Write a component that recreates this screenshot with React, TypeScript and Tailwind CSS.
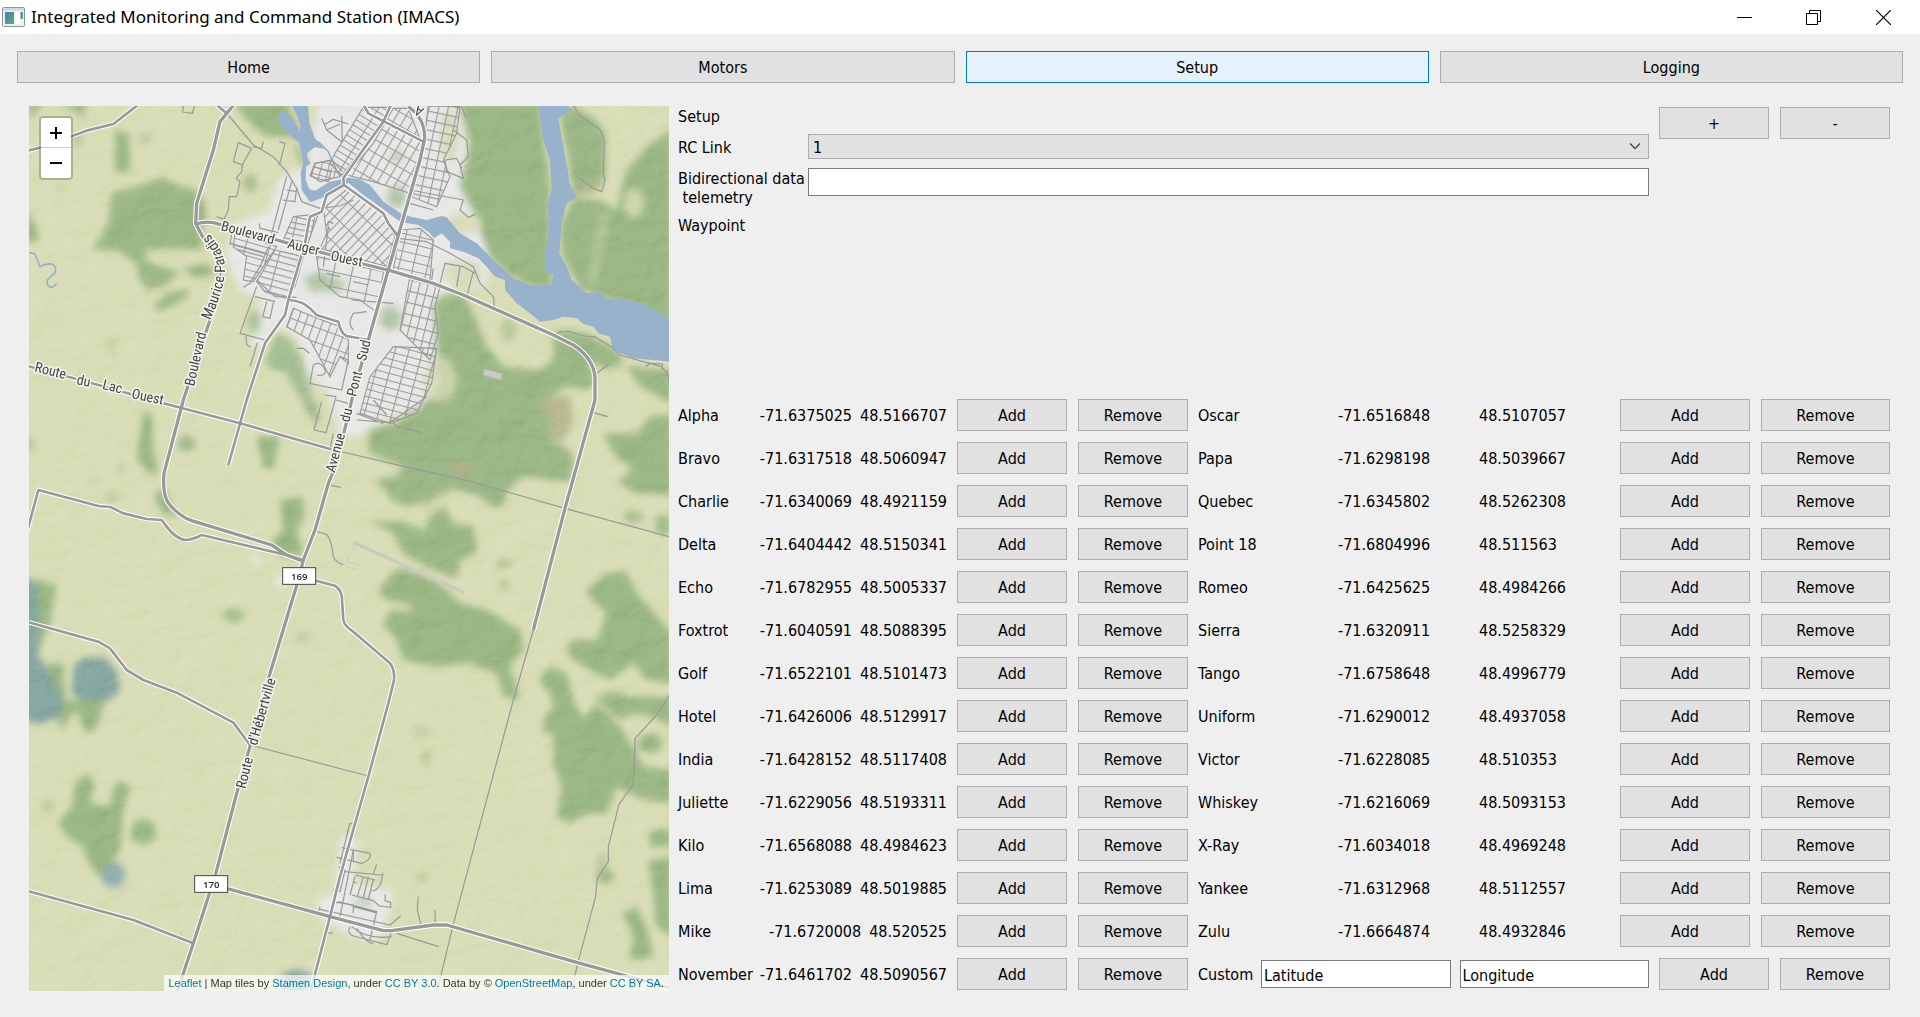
import React from "react";
import clsx from "clsx";

type Waypoint = [name: string, longitude: string, latitude: string];

const LEFT: Waypoint[] = [
  ["Alpha", "-71.6375025", "48.5166707"],
  ["Bravo", "-71.6317518", "48.5060947"],
  ["Charlie", "-71.6340069", "48.4921159"],
  ["Delta", "-71.6404442", "48.5150341"],
  ["Echo", "-71.6782955", "48.5005337"],
  ["Foxtrot", "-71.6040591", "48.5088395"],
  ["Golf", "-71.6522101", "48.5101473"],
  ["Hotel", "-71.6426006", "48.5129917"],
  ["India", "-71.6428152", "48.5117408"],
  ["Juliette", "-71.6229056", "48.5193311"],
  ["Kilo", "-71.6568088", "48.4984623"],
  ["Lima", "-71.6253089", "48.5019885"],
  ["Mike", "-71.6720008", "48.520525"],
  ["November", "-71.6461702", "48.5090567"],
];

const RIGHT: Waypoint[] = [
  ["Oscar", "-71.6516848", "48.5107057"],
  ["Papa", "-71.6298198", "48.5039667"],
  ["Quebec", "-71.6345802", "48.5262308"],
  ["Point 18", "-71.6804996", "48.511563"],
  ["Romeo", "-71.6425625", "48.4984266"],
  ["Sierra", "-71.6320911", "48.5258329"],
  ["Tango", "-71.6758648", "48.4996779"],
  ["Uniform", "-71.6290012", "48.4937058"],
  ["Victor", "-71.6228085", "48.510353"],
  ["Whiskey", "-71.6216069", "48.5093153"],
  ["X-Ray", "-71.6034018", "48.4969248"],
  ["Yankee", "-71.6312968", "48.5112557"],
  ["Zulu", "-71.6664874", "48.4932846"],
];

function PushButton({
  children,
  className,
  active,
  ...rest
}: React.ButtonHTMLAttributes<HTMLButtonElement> & { active?: boolean }) {
  return (
    <button
      type="button"
      className={clsx(
        "h-8 border pt-0.5 text-center leading-7",
        active ? "border-[#0078d7] bg-[#e5f1fb]" : "border-[#adadad] bg-[#e1e1e1]",
        className,
      )}
      {...rest}
    >
      {children}
    </button>
  );
}

/* ---------- map ---------- */

const FORESTS = [
  "M275,280 L330,265 L430,232 L470,255 L520,265 L550,300 L560,350 L540,400 L550,450 L470,445 L380,450 L370,470 L400,495 L480,515 L440,555 L380,570 L355,530 L350,490 L290,450 L215,450 L250,400 L265,360Z",
  "M400,620 L440,580 L500,570 L510,585 L470,610 L420,635Z",
  "M480,505 L560,490 L590,520 L540,535Z",
  "M285,90 L325,100 L330,215 L285,215Z",
  "M27,10 L70,10 L27,60Z",
  "M120,10 L200,10 L190,48Z",
  "M640,8 L800,8 L830,70 L850,110 L740,110 L680,60Z",
  "M815,110 L860,180 L845,200Z",
  "M20,330 L45,370 L58,420 L20,430Z",
  "M165,100 L188,115 L170,150Z",
  "M1310,8 L1560,8 L1575,150 L1590,250 L1590,400 L1600,560 L1530,560 L1460,520 L1380,440 L1330,380 L1290,300 L1330,220 L1350,120Z",
  "M1620,50 L1660,18 L1730,60 L1755,100 L1755,240 L1720,270 L1660,290 L1640,150Z",
  "M1955,90 L1880,140 L1820,210 L1800,280 L1790,330 L1740,300 L1660,295 L1620,380 L1625,460 L1680,570 L1800,610 L1955,670Z",
  "M1225,650 L1260,590 L1330,580 L1360,640 L1400,740 L1450,800 L1560,810 L1600,780 L1600,710 L1640,700 L1700,740 L1725,850 L1700,870 L1640,860 L1580,900 L1590,970 L1600,1030 L1640,1045 L1665,1080 L1650,1145 L1510,1130 L1460,1170 L1455,1215 L1420,1222 L1380,1190 L1300,1165 L1230,1200 L1160,1220 L1110,1200 L1100,1170 L1060,1140 L1130,1130 L1150,1100 L1050,1060 L1045,990 L1130,970 L1200,910 L1255,850 L1245,720Z",
  "M1600,690 L1700,700 L1790,750 L1810,790 L1760,810 L1700,780Z",
  "M1820,800 L1955,810 L1955,910 L1860,860Z",
  "M1750,1000 L1850,1000 L1890,950 L1955,945 L1955,1185 L1850,1180 L1790,1145 L1840,1110 L1780,1060Z",
  "M1055,1265 L1140,1265 L1215,1290 L1235,1240 L1275,1220 L1300,1270 L1360,1280 L1370,1360 L1320,1380 L1310,1435 L1270,1420 L1220,1400 L1150,1360 L1120,1300Z",
  "M1075,1470 L1130,1405 L1200,1420 L1270,1460 L1320,1510 L1400,1530 L1500,1590 L1510,1650 L1470,1700 L1500,1800 L1450,1790 L1430,1720 L1350,1690 L1250,1700 L1150,1680 L1130,1620 L1090,1570 L1110,1530 L1180,1535 L1160,1510 L1100,1500Z",
  "M1695,1475 L1760,1420 L1820,1415 L1850,1480 L1920,1560 L1955,1600 L1955,1750 L1880,1740 L1840,1690 L1770,1740 L1690,1700 L1640,1660 L1650,1620 L1730,1620 L1760,1540Z",
  "M1575,1720 L1640,1720 L1660,1800 L1690,1855 L1730,1810 L1800,1880 L1850,1960 L1870,2000 L1955,2010 L1955,2110 L1860,2095 L1790,2060 L1760,2140 L1700,2140 L1650,2170 L1610,2150 L1625,2060 L1600,1990 L1600,1900 L1570,1900 L1570,1860 L1600,1820Z",
  "M1720,1790 L1955,1790 L1955,1880 L1900,1850 L1840,1840 L1800,1860Z",
  "M1890,2190 L1955,2190 L1955,2240 L1890,2240Z",
  "M1885,2280 L1955,2270 L1955,2510 L1910,2480 L1895,2350Z",
  "M1805,2440 L1850,2420 L1885,2500 L1900,2570 L1830,2580 L1840,2500Z",
  "M370,940 L395,940 L400,1060 L415,1120 L390,1120 L350,1080Z",
  "M400,1190 L430,1160 L470,1250 L430,1240Z",
  "M710,1010 L780,1010 L760,1110 L730,1100Z",
  "M780,1200 L850,1190 L850,1260 L830,1290 L850,1365 L780,1370 L755,1320 L790,1290Z",
  "M40,1440 L110,1455 L90,1570 L60,1640 L40,1700Z",
  "M80,1690 L130,1690 L135,1800 L160,1800 L260,1790 L230,1880 L200,1905 L170,1830 L120,1890Z",
  "M155,2120 L165,2050 L200,2020 L225,2050 L210,2110 L270,2120 L280,2060 L300,2040 L330,2060 L310,2120 L300,2250 L240,2330 L200,2280 L190,2240 L140,2210 L115,2170Z",
  "M850,530 L900,515 L980,545 L960,575 L870,575Z",
  "M735,790 L770,700 L810,720 L850,790 L860,860 L890,920 L900,980 L860,930 L800,820Z",
];

/* [cx, cy, rx, ry, opacity] */
const GROVES = [
  [690, 250, 22, 28, 0.8], [375, 115, 18, 20, 0.4], [120, 262, 14, 14, 0.3], [705, 665, 22, 30, 0.8],
  [1130, 290, 32, 32, 0.9], [1130, 170, 24, 22, 0.4], [1112, 655, 36, 38, 0.8], [1465, 690, 24, 36, 0.5],
  [1600, 1740, 38, 34, 1], [1450, 1390, 24, 12, 0.7], [1452, 1455, 15, 20, 0.6], [1840, 1250, 30, 18, 0.8],
  [1930, 1275, 25, 30, 0.9], [1890, 1930, 36, 28, 1], [1755, 2330, 28, 22, 0.9], [1745, 2285, 16, 30, 0.5],
  [1205, 1895, 28, 16, 0.4], [1220, 1975, 16, 28, 0.4], [1207, 2330, 22, 16, 0.4], [498, 1030, 26, 24, 0.9],
  [275, 1190, 20, 16, 0.4], [24, 1030, 16, 18, 0.7], [370, 2195, 38, 38, 1], [82, 2120, 16, 18, 0.5],
  [640, 1545, 34, 20, 0.8], [850, 1612, 26, 16, 0.4], [1780, 1790, 36, 18, 0.8], [1225, 460, 34, 20, 0.2],
  [305, 1105, 14, 22, 0.3], [225, 1145, 20, 12, 0.3], [275, 740, 14, 34, 0.25], [870, 470, 16, 40, 0.3],
];

const TOWNS = [
  "M880,70 L900,10 L1320,10 L1345,150 L1320,260 L1370,350 L1410,480 L1400,560 L1300,560 L1240,600 L1250,740 L1260,860 L1190,930 L1120,950 L1010,1010 L960,1000 L940,940 L920,870 L860,820 L840,720 L780,680 L730,740 L690,740 L720,600 L650,560 L620,460 L640,370 L740,340 L780,230 L860,200Z",
  "M965,2200 L1010,2220 L1000,2350 L1120,2370 L1110,2430 L1070,2530 L980,2500 L900,2450 L890,2400 L940,2380Z",
];

const LAWNS = [
  [1260, 840, 50, 70], [1290, 110, 30, 80], [1330, 520, 60, 40], [1330, 370, 60, 30],
];

const RIVER =
  "M815,16 L864,16 L868,70 L885,115 L915,146 L885,142 L862,158 L862,175 L872,190 L858,200 L857,240 L868,268 L885,272 L930,245 L985,233 L1020,238 L1050,255 L1090,305 L1150,345 L1220,360 L1265,348 L1280,352 L1320,400 L1370,430 L1420,480 L1480,535 L1535,557 L1595,552 L1600,525 L1575,515 L1575,490 L1585,400 L1585,300 L1595,270 L1590,180 L1570,120 L1555,16 L1638,16 L1658,30 L1615,55 L1630,140 L1645,220 L1648,250 L1672,293 L1640,310 L1625,370 L1618,460 L1640,500 L1655,540 L1700,580 L1735,575 L1760,595 L1860,605 L1950,658 L1950,785 L1840,775 L1780,750 L1770,710 L1735,700 L1720,680 L1690,672 L1670,655 L1630,650 L1600,660 L1560,665 L1530,640 L1490,610 L1455,570 L1455,540 L1425,530 L1400,500 L1375,475 L1330,455 L1290,445 L1290,425 L1265,400 L1242,415 L1225,395 L1195,375 L1140,365 L1080,320 L1030,285 L985,248 L930,285 L870,307 L845,270 L842,220 L850,190 L838,130 L805,100 L780,70 L778,35 L790,30 L820,60 L838,95 L842,80 L830,45Z";

const HIGHWAYS = [
  "M530,372 Q560,360 600,373 L1030,492 L1110,512 L1240,550 L1330,585 L1600,705 L1660,735 Q1720,775 1725,830 L1725,900 L1635,1225 L1540,1590",
  "M1165,20 Q1215,55 1214,115 L1200,180 L1105,510 L1045,720 L1000,880 L950,1090 L925,1150 L885,1290 L850,1380 L835,1440 L750,1720 L690,1940 L650,2080 L585,2330 L565,2390 L520,2530 L470,2680",
  "M645,10 L600,65 L580,150 L530,310 L527,370 L545,405 L585,460 L605,520 L590,600 L490,900 L432,1120 Q426,1190 450,1215 Q480,1250 515,1262 L755,1335 L800,1365 L850,1382",
  "M600,2360 L930,2450 L1090,2492 L1115,2492 L1240,2475 L1280,2475 L1670,2587 L1955,2665",
];

const SECONDARY = [
  "M1115,10 L1090,65 L1025,155 L970,235 L972,255 L920,285 L905,335 L870,350 L855,430 L805,600 L795,645 L735,730 L680,900 L625,1095",
  "M972,255 L1090,340 L1105,370 L1135,410",
  "M1028,10 L1045,40 L1210,125",
  "M810,600 Q850,605 870,625 L890,645 L955,665 Q962,700 980,708 L1045,720",
  "M585,10 L622,42",
  "M20,153 L60,143 L200,92 L280,72 L355,14",
  "M20,797 L200,845 L430,910 L660,970 L930,1047",
  "M20,1300 L55,1170 L235,1218 L272,1221 L310,1240 L380,1257 L425,1260 L440,1280 Q470,1320 500,1320 Q520,1318 545,1305 L800,1365 L850,1385",
  "M20,1565 L235,1625 L270,1645 L320,1710 L370,1740 L470,1778 L640,1868 L690,1935",
  "M880,1440 L945,1457 Q968,1475 966,1500 L970,1560 Q975,1580 1000,1595 L1110,1690 Q1125,1710 1122,1740 L1105,1810 L1045,2030 L960,2330 L930,2450 L870,2680",
  "M20,2372 L340,2460 L520,2530",
];

const LANES = [
  "M1540,1590 L1480,1800 L1298,2480 L1250,2680",
  "M930,1047 L1190,1108 L1335,1140 L1635,1225 L1955,1312",
  "M690,1935 L1045,2028",
  "M1955,1775 L1910,1845 L1845,1915 L1843,2000 L1838,2055 L1797,2113 L1765,2240 L1765,2285 L1732,2335 L1727,2390 L1673,2590 L1653,2680",
  "M622,42 L700,135 L760,170 L800,215 L830,265 L845,305 L900,325 L960,318 L1000,300",
  "M695,145 L655,128 L640,185 L667,195 L675,180 L695,145 M667,195 L665,215 L648,235 L660,245 L650,290 L628,290 L625,330 L612,358 L590,350",
  "M700,140 L725,145 L730,125 M778,125 L795,130 L778,195",
  "M490,18 L488,36 L518,40 L523,18",
  "M800,230 L755,400 M815,245 L775,390 M830,265 L825,305 L788,300 M800,270 L830,275",
  "M905,55 L920,90 L965,125 M912,75 L940,58 L985,72 M965,48 L967,125 M920,90 L960,72",
  "M870,228 L885,190 L940,180 M870,228 L925,245 L935,205 M880,200 L930,215",
  "M885,1293 L920,1303 Q935,1320 940,1370 Q945,1385 970,1395",
  "M1656,10 L1680,48 L1735,85 Q1755,100 1752,150 L1750,220 L1755,240 L1745,275 L1720,265 L1678,235",
  "M1607,710 Q1605,692 1650,695 L1690,708 L1725,710 L1780,745 L1800,765 L1870,785 L1925,800 L1945,825 L1948,850 M1878,800 L1890,790 L1928,792 L1925,808",
  "M1730,820 L1768,792 M1720,938 L1763,950",
  "M1135,415 L1220,425 L1290,460 L1360,500 L1380,550 L1420,590 L1425,635 M1360,515 L1340,590",
  "M1260,550 L1275,490 L1330,500 L1365,520 M1320,500 L1310,560 M1240,505 L1235,540",
  "M1170,270 L1330,300 L1320,330 L1345,352 L1368,342 M1170,310 L1240,330",
  "M1300,90 L1340,120 L1345,170 L1320,195 L1330,235 L1280,215 L1275,180 L1310,175 L1325,205",
  "M1320,10 L1340,55",
  "M710,560 L660,700 L735,720 M705,590 L765,605 M740,605 L728,650 L750,655 L760,608 M678,708 L680,735 L692,740 M712,728 L690,800 M710,540 L765,590 L830,592",
  "M718,370 L720,385 L775,398 M630,430 L740,460 M650,448 L730,470 M635,400 L630,435 M745,440 L725,490 L690,550 L670,562",
  "M905,905 L882,990 L918,998 L948,890 L915,885 M940,1000 L930,1047 M948,900 L985,910",
  "M920,1153 L962,1162",
  "M830,745 L850,745 L868,760 M868,850 L965,870 L985,780 L960,770 M870,850 L880,795 Q900,780 915,810 Q920,830 890,825",
  "M1010,960 L1110,968 L1220,890 M1110,960 L1130,978 L1205,998 M1010,940 L1090,970 M1060,900 L1100,945",
  "M930,390 Q920,375 925,365 L940,370 M925,380 L910,500 M920,520 L960,530",
  "M1000,690 Q980,670 1000,640 L1040,635 M995,600 L1120,610 M1045,555 L1000,545",
  "M990,2170 L1002,2172 M990,2168 L960,2290 M965,2243 L1050,2260 Q1055,2280 1025,2290 L950,2272 M1000,2250 L1000,2285 M975,2315 L1085,2325 M1070,2293 L1060,2322 M1088,2318 Q1085,2370 1055,2373",
  "M1005,2330 L990,2385 M1005,2325 L1065,2340 M1030,2330 L1012,2390 M1045,2330 L1030,2392 M1060,2338 L1045,2398 M995,2385 L1060,2402 L1078,2418 L1112,2422 L1112,2408 L1095,2402 L1096,2383",
  "M1000,2250 L960,2450 M900,2420 L895,2440 M900,2428 L1110,2475 L1142,2448 M955,2405 L1070,2435 L1050,2520 M1000,2440 L1000,2420 L1068,2438 M990,2480 Q980,2500 1000,2508 L1100,2534 L1115,2495 M995,2480 Q1040,2520 1115,2510 M1010,2485 Q1040,2530 1060,2530",
  "M1195,2390 L1192,2430 L1203,2475 M1245,2430 L1246,2475 M1130,2500 L1256,2540 M915,2497 L938,2500",
  "M955,2300 L975,2310 L960,2375 L940,2370 M935,2405 L1000,2415 M1010,2350 L1000,2345",
];

/* Blocks of parallel streets: outline, rotation, street spacing across and along */
const BLOCKS: { d: string; angle: number; w: number; h: number }[] = [
  { d: "M1120,25 L1165,25 L1205,130 L1170,280 L1060,245 L980,225 L1060,130Z", angle: 30, w: 25, h: 36 },
  { d: "M1030,22 L1110,22 L1080,70 L965,228 L930,190 L945,160Z", angle: 32, w: 44, h: 18 },
  { d: "M1225,18 L1320,20 L1310,100 L1270,180 L1290,230 L1250,320 L1175,290 L1205,180Z", angle: 12, w: 28, h: 28 },
  { d: "M985,265 L1090,345 L1125,410 L1100,500 L900,445 L920,400 L910,325Z", angle: 44, w: 20, h: 58 },
  { d: "M820,350 L895,342 L860,440 L790,420Z", angle: 12, w: 52, h: 17 },
  { d: "M765,450 L850,470 L825,560 L800,595 L735,575 L710,545Z", angle: 15, w: 58, h: 19 },
  { d: "M1170,530 L1260,560 L1245,620 L1255,700 L1230,780 L1140,690Z", angle: 14, w: 24, h: 34 },
  { d: "M1120,740 L1250,745 L1235,850 L1190,940 L1110,970 L1020,940 L1050,830Z", angle: 15, w: 40, h: 21 },
  { d: "M820,625 L880,650 L960,680 L985,720 L985,790 L960,770 L930,830 L870,720 L800,680Z", angle: 20, w: 24, h: 42 },
  { d: "M1140,390 L1200,385 L1240,420 L1230,540 L1120,510Z", angle: 13, w: 42, h: 26 },
  { d: "M645,400 L770,440 L700,545 L670,540 L680,470 L640,440Z", angle: 16, w: 70, h: 20 },
  { d: "M890,470 L1090,515 L1075,640 L1020,600 L960,590 L900,540Z", angle: 12, w: 54, h: 44 },
  { d: "M885,190 L935,180 L960,230 L900,245 L872,225Z", angle: 14, w: 22, h: 20 },
];

const LABELS: [text: string, x: number, y: number, angle: number][] = [
  ["Boulevard", 601, 390, 15], ["Auger", 800, 444, 13], ["Ouest", 930, 480, 12],
  ["Boulevard", 522, 860, -77],
  ["Route", 42, 814, 14], ["du", 168, 852, 13], ["Lac", 245, 866, 14], ["Ouest", 333, 894, 12],
  ["Avenue", 944, 1120, -75], ["du", 987, 968, -76], ["Pont", 1008, 892, -76], ["Sud", 1037, 785, -76],
  ["Route", 676, 2068, -76], ["d'Hébertville", 710, 1938, -74],
];

const PARADIS_PATH = "M570,662 Q626,540 612,480 Q600,430 546,380";

function Shield({ x, y, n }: { x: number; y: number; n: string }) {
  return (
    <g>
      <rect x={x} y={y} width="99" height="50" fill="#fff" stroke="#444" strokeWidth="3" />
      <text x={x + 50} y={y + 36} textAnchor="middle" fontSize="29" fontWeight="600" fill="#333" className="font-['Noto_Sans',sans-serif]">
        {n}
      </text>
    </g>
  );
}

function MapDrawing() {
  return (
    <svg viewBox="27 18 1920 2655" preserveAspectRatio="xMidYMid slice" className="absolute inset-0 h-full w-full" role="img" aria-label="Terrain map">
      <defs>
        <filter id="soft" x="-10%" y="-10%" width="120%" height="120%" colorInterpolationFilters="sRGB">
          <feGaussianBlur stdDeviation="11" />
        </filter>
        <filter id="relief" x="0" y="0" width="100%" height="100%" colorInterpolationFilters="sRGB">
          <feTurbulence type="fractalNoise" baseFrequency="0.011 0.015" numOctaves="5" seed="8" />
          <feDiffuseLighting lightingColor="#fff" surfaceScale="26" diffuseConstant="0.66">
            <feDistantLight azimuth="225" elevation="48" />
          </feDiffuseLighting>
        </filter>
        <path id="paradis" d={PARADIS_PATH} />
        {BLOCKS.map((b, i) => (
          <pattern key={i} id={`block${i}`} width={b.w} height={b.h} patternUnits="userSpaceOnUse" patternTransform={`rotate(${b.angle})`}>
            <path d={`M0,1.5 H${b.w} M1.5,0 V${b.h}`} stroke="#999" strokeWidth="3.4" />
          </pattern>
        ))}
      </defs>
      <rect x="27" y="18" width="1920" height="2655" fill="#dadeb8" />
      <g filter="url(#soft)">
        <g fill="#9cb886">
          {FORESTS.map((d) => <path key={d} d={d} />)}
          {GROVES.map(([cx, cy, rx, ry, o]) => <ellipse key={`${cx}-${cy}`} cx={cx} cy={cy} rx={rx} ry={ry} opacity={o} />)}
        </g>
        <g fill="#dadeb8">
          <path d="M1770,10 L1850,10 L1850,90 L1800,200 L1770,240 L1770,120Z" opacity="0.8" />
          <ellipse cx="1840" cy="310" rx="32" ry="44" opacity="0.8" />
          <path d="M1740,340 L1770,340 L1730,550 L1700,550Z" opacity="0.4" />
        </g>
        <g fill="#b5b48d" opacity="0.85">
          <path d="M1550,890 L1650,890 L1660,960 L1625,1030 L1600,1020 L1590,960Z" />
          <ellipse cx="1325" cy="1105" rx="42" ry="20" />
          <ellipse cx="1220" cy="1210" rx="28" ry="18" opacity="0.4" />
          <ellipse cx="1705" cy="258" rx="40" ry="22" opacity="0.7" />
        </g>
        <g fill="#88a8a2">
          <path d="M10,1430 L50,1450 L58,1560 L50,1660 L90,1720 L130,1800 L120,1850 L60,1872 L10,1860Z" />
          <path d="M160,1700 L190,1672 L250,1672 L290,1710 L300,1770 L270,1800 L190,1805 L155,1780Z" />
          <ellipse cx="830" cy="2645" rx="52" ry="34" />
        </g>
        <ellipse cx="280" cy="2325" rx="36" ry="38" fill="#93aeb0" />
        <g fill="#e8e8e7">
          {TOWNS.map((d) => <path key={d} d={d} />)}
          <circle cx="710" cy="1380" r="14" />
          <circle cx="785" cy="1440" r="20" />
        </g>
        <g fill="#d6dbb4" opacity="0.8">
          {LAWNS.map(([cx, cy, rx, ry]) => <ellipse key={cy} cx={cx} cy={cy} rx={rx} ry={ry} />)}
        </g>
        <g fill="#a9c19a" opacity="0.8">
          <path d="M850,530 L900,515 L980,545 L960,575 L870,575Z" />
          <ellipse cx="1130" cy="290" rx="30" ry="32" />
          <ellipse cx="1130" cy="172" rx="22" ry="20" opacity="0.6" />
          <ellipse cx="1112" cy="655" rx="34" ry="36" />
          <ellipse cx="705" cy="665" rx="20" ry="34" />
          <path d="M740,800 L780,710 L815,730 L850,800 L890,920 L860,920 L800,820Z" />
          <ellipse cx="1030" cy="2405" rx="30" ry="14" opacity="0.7" />
        </g>
      </g>
      <rect x="27" y="18" width="1920" height="2655" filter="url(#relief)" className="opacity-15 mix-blend-soft-light" />
      <path d={RIVER} fill="#99b2cc" />
      <g fill="none" stroke="#99b2cc">
        <path d="M895,125 L925,155 L935,180 L968,215" strokeWidth="5" />
        <path d="M22,456 L45,462 L60,500 Q75,490 95,492 Q112,500 105,518 L82,540 Q78,562 98,562 L110,550" strokeWidth="5" />
      </g>
      <path d="M1000,1327 L1333,1478" stroke="#c8ccbe" strokeWidth="10" />
      <path d="M1005,1330 L980,1385 L1015,1393 L1008,1408 L975,1398 L985,1380" stroke="#c8ccbe" strokeWidth="3" fill="none" />
      <path d="M1393,807 L1447,822 L1443,840 L1390,825Z" fill="#c9c9c9" stroke="#bbb" strokeWidth="2" />
      {BLOCKS.map((b, i) => (
        <path key={i} d={b.d} fill={`url(#block${i})`} stroke="#999" strokeWidth="3.4" />
      ))}
      <g fill="none" stroke="#999" strokeWidth="3.6" strokeLinejoin="round">
        {LANES.map((d) => <path key={d} d={d} />)}
      </g>
      <g fill="none" strokeLinejoin="round">
        {SECONDARY.map((d) => <path key={d} d={d} stroke="#fff" strokeWidth="14" />)}
        {HIGHWAYS.map((d) => <path key={d} d={d} stroke="#fff" strokeWidth="16" />)}
        {SECONDARY.map((d) => <path key={d} d={d} stroke="#999" strokeWidth="8" />)}
        {HIGHWAYS.map((d) => <path key={d} d={d} stroke="#999" strokeWidth="10" />)}
      </g>
      <g fontSize="42" fill="#444" stroke="#f4f4ee" strokeWidth="9" strokeLinejoin="round" className="font-['Roboto_Condensed','Open_Sans_Condensed',sans-serif] [paint-order:stroke]">
        {LABELS.map(([t, x, y, a]) => (
          <text key={`${x}-${y}`} transform={`translate(${x} ${y}) rotate(${a})`}>{t}</text>
        ))}
        <text fontSize="44"><textPath href="#paradis">Maurice-Paradis</textPath></text>
        <text transform="translate(1196 34) rotate(210)" textAnchor="middle" dominantBaseline="central">A</text>
      </g>
      <Shield x={788} y={1403} n="169" />
      <Shield x={524} y={2327} n="170" />
    </svg>
  );
}

function MapPanel() {
  const link = "text-[#0078a8]";
  return (
    <section aria-label="Map" className="relative overflow-hidden bg-[#dadeb8]">
      <MapDrawing />
      <div className="absolute left-2.5 top-2.5 flex flex-col rounded border-2 border-black/20 bg-clip-padding">
        <button type="button" aria-label="Zoom in" className="flex h-[30px] w-[30px] items-center justify-center rounded-t-xs border-b border-[#ccc] bg-white">
          <svg viewBox="0 0 12 12" className="size-3"><path d="M6,0 V12 M0,6 H12" stroke="#000" strokeWidth="2" /></svg>
        </button>
        <button type="button" aria-label="Zoom out" className="flex h-[30px] w-[30px] items-center justify-center rounded-b-xs bg-white">
          <svg viewBox="0 0 12 12" className="size-3"><path d="M0,6 H12" stroke="#000" strokeWidth="2" /></svg>
        </button>
      </div>
      <p className="absolute bottom-0 right-0 whitespace-nowrap bg-white/70 px-[5px] font-['Liberation_Sans',Arial,sans-serif] text-[11px] leading-4 text-[#333]">
        <a href="#leaflet" className={link}>Leaflet</a> | Map tiles by <a href="#stamen" className={link}>Stamen Design</a>, under{" "}
        <a href="#cc-by" className={link}>CC BY 3.0</a>. Data by © <a href="#osm" className={link}>OpenStreetMap</a>, under{" "}
        <a href="#cc-by-sa" className={link}>CC BY SA</a>.
      </p>
    </section>
  );
}

/* ---------- setup page ---------- */

function SetupForm() {
  return (
    <div className="flex gap-2.5">
      <div className="grid flex-1 grid-cols-[130px_1fr] gap-y-[9px]">
        <h2 className="col-span-2 h-[18px] leading-5">Setup</h2>
        <label htmlFor="rc-link" className="self-center pt-0.5 leading-[19px]">RC Link</label>
        <div className="relative">
          <select id="rc-link" defaultValue="1" className="block h-[25px] w-full appearance-none border border-[#adadad] bg-[#e1e1e1] px-1 pt-0.5 leading-[19px]">
            <option>1</option>
          </select>
          <svg viewBox="0 0 12 7" className="pointer-events-none absolute right-2 top-[9px] h-[7px] w-3">
            <path d="M1,0.5 L6,5.5 L11,0.5" fill="none" stroke="#444" strokeWidth="1.3" />
          </svg>
        </div>
        <label htmlFor="telemetry" className="whitespace-pre pt-px leading-[19px]">{"Bidirectional data\n telemetry"}</label>
        <input id="telemetry" type="text" className="h-7 w-full border border-[#7a7a7a] bg-white px-1" />
        <h2 className="col-span-2 leading-[19px]">Waypoint</h2>
      </div>
      <div className="flex items-start gap-[11px]">
        <PushButton className="w-[110px]">+</PushButton>
        <PushButton className="w-[110px]">-</PushButton>
      </div>
    </div>
  );
}

const CELL = "p-0 pt-0.5 text-left font-normal leading-[30px] whitespace-nowrap";

function LeftTable() {
  return (
    <table aria-label="Waypoints Alpha to November" className="w-full table-fixed border-collapse">
      <colgroup>
        <col className="w-[78px]" />
        <col className="w-[201px]" />
        <col className="w-[121px]" />
        <col className="w-[110px]" />
      </colgroup>
      <tbody>
        {LEFT.map(([name, lon, lat]) => (
          <tr key={name} className="h-[43px] align-top last:h-8">
            <th scope="row" className={CELL}>{name}</th>
            <td className="whitespace-nowrap pb-0 pl-0 pr-2.5 pt-0.5 text-right leading-[30px]">
              {lon}
              <span className="ml-2">{lat}</span>
            </td>
            <td className="py-0 pl-0 pr-[11px]"><PushButton className="block w-full" aria-label={`Add ${name}`}>Add</PushButton></td>
            <td className="p-0"><PushButton className="block w-full" aria-label={`Remove ${name}`}>Remove</PushButton></td>
          </tr>
        ))}
      </tbody>
    </table>
  );
}

function RightTable() {
  return (
    <div>
      <table aria-label="Waypoints Oscar to Zulu" className="w-full table-fixed border-collapse">
        <colgroup>
          <col className="w-[140px]" />
          <col className="w-[141px]" />
          <col className="w-[141px]" />
          <col className="w-[141px]" />
          <col className="w-[129px]" />
        </colgroup>
        <tbody>
          {RIGHT.map(([name, lon, lat]) => (
            <tr key={name} className="h-[43px] align-top">
              <th scope="row" className={CELL}>{name}</th>
              <td className={CELL}>{lon}</td>
              <td className={CELL}>{lat}</td>
              <td className="py-0 pl-0 pr-[11px]"><PushButton className="block w-full" aria-label={`Add ${name}`}>Add</PushButton></td>
              <td className="p-0"><PushButton className="block w-full" aria-label={`Remove ${name}`}>Remove</PushButton></td>
            </tr>
          ))}
        </tbody>
      </table>
      <form className="flex items-center gap-2.5">
        <label htmlFor="custom-lat" className="-mr-2.5 w-[63px] pt-0.5">Custom</label>
        <div className="flex min-w-0 flex-1 gap-[9px]">
          <input id="custom-lat" aria-label="Custom latitude" type="text" defaultValue="Latitude" className="h-7 w-0 flex-1 border border-[#7a7a7a] bg-white px-0.5 pt-0.5" />
          <input aria-label="Custom longitude" type="text" defaultValue="Longitude" className="h-7 w-0 flex-1 border border-[#7a7a7a] bg-white px-0.5 pt-0.5" />
        </div>
        <div className="flex gap-[11px]">
          <PushButton className="w-[110px]">Add</PushButton>
          <PushButton className="w-[110px]">Remove</PushButton>
        </div>
      </form>
    </div>
  );
}

/* ---------- window ---------- */

function TitleBar() {
  return (
    <header className="flex h-[34px] items-center bg-white pl-0.5">
      <svg viewBox="0 0 23 20" className="h-5 w-[23px]">
        <defs>
          <linearGradient id="pane" x1="0" y1="0" x2="1" y2="1">
            <stop offset="0" stopColor="#4a7fb5" />
            <stop offset="1" stopColor="#5cae7a" />
          </linearGradient>
        </defs>
        <rect x="0.5" y="0.5" width="22" height="19" rx="1" fill="#eef0f2" stroke="#8a949c" />
        <rect x="1" y="1" width="21" height="2.5" fill="#cfd6dc" />
        <rect x="3" y="5" width="9" height="12" fill="url(#pane)" />
        <rect x="13.5" y="5" width="4" height="12" fill="#fff" />
        <rect x="18.5" y="5" width="2.5" height="7" fill="url(#pane)" />
      </svg>
      <h1 className="ml-1.5 font-['Noto_Sans',sans-serif] text-[17px] leading-6">Integrated Monitoring and Command Station (IMACS)</h1>
      <div className="ml-auto flex">
        <button type="button" aria-label="Minimize" className="flex h-8 w-[70px] items-center justify-center">
          <svg viewBox="0 0 15 15" className="size-[15px]"><path d="M0,7.5 H15" stroke="#000" /></svg>
        </button>
        <button type="button" aria-label="Restore" className="flex h-8 w-[68px] items-center justify-center">
          <svg viewBox="0 0 15 15" className="size-[15px]"><path d="M0.5,3.5 H11.5 V14.5 H0.5Z M3.5,3.5 V0.5 H14.5 V11.5 H11.5" fill="none" stroke="#000" /></svg>
        </button>
        <button type="button" aria-label="Close" className="flex h-8 w-[73px] items-center justify-center">
          <svg viewBox="0 0 15 15" className="size-[15px]"><path d="M0,0 L15,15 M15,0 L0,15" stroke="#000" strokeWidth="1.2" /></svg>
        </button>
      </div>
    </header>
  );
}

export default function App() {
  return (
    <div className="flex min-h-screen flex-col bg-[#efefef] font-['DejaVu_Sans_Condensed',Tahoma,sans-serif] text-base text-black">
      <TitleBar />
      <nav className="mx-[17px] mt-[17px] grid grid-cols-4 gap-[11px]">
        <PushButton>Home</PushButton>
        <PushButton>Motors</PushButton>
        <PushButton active>Setup</PushButton>
        <PushButton>Logging</PushButton>
      </nav>
      <main className="mb-[26px] ml-[29px] mr-[30px] mt-[23px] grid flex-1 grid-cols-[640fr_1212fr] gap-[9px]">
        <MapPanel />
        <div className="flex flex-col justify-between gap-8 py-px">
          <SetupForm />
          <div className="grid grid-cols-[510fr_692fr] gap-2.5">
            <LeftTable />
            <RightTable />
          </div>
        </div>
      </main>
    </div>
  );
}
